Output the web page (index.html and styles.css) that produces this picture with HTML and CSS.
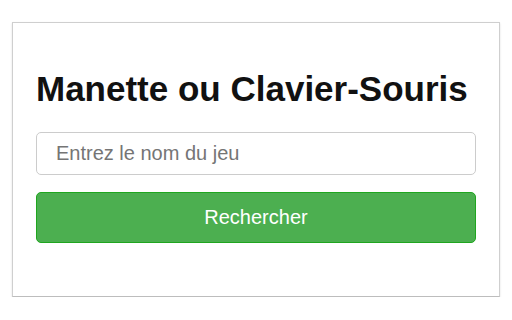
FILE: index.html
```html
<!DOCTYPE html>
<html lang="fr">
<head>
<meta charset="utf-8">
<title>Manette ou Clavier-Souris</title>
<link rel="stylesheet" href="styles.css">
</head>
<body>
<div class="card">
  <h1 class="title">Manette ou Clavier-Souris</h1>
  <form class="search" onsubmit="return false;">
    <input class="field" type="text" placeholder="Entrez le nom du jeu">
    <button class="btn" type="submit">Rechercher</button>
  </form>
</div>
</body>
</html>
```
FILE: styles.css
```css
html, body {
  margin: 0;
  padding: 0;
  background: #ffffff;
}
body {
  padding: 22px 12px 0 12px;
  font-family: "Liberation Sans", Arial, sans-serif;
}
.card {
  width: 488px;
  height: 275px;
  box-sizing: border-box;
  border: 1px solid #cfcfcf;
  border-bottom-color: #bdbdbd;
  box-shadow: 0 1px 2px rgba(0,0,0,0.12);
  padding: 46px 23px 0 23px;
  background: #fff;
}
.title {
  margin: 0;
  font-size: 35px;
  line-height: 40px;
  font-weight: bold;
  color: #111;
}
.search {
  margin-top: 23px;
  display: flex;
  flex-direction: column;
  gap: 17px;
}
.field {
  box-sizing: border-box;
  width: 440px;
  height: 43px;
  border: 1px solid #cccccc;
  border-radius: 5px;
  padding: 0 19px;
  font-family: "Liberation Sans", Arial, sans-serif;
  font-size: 20px;
  color: #333;
  outline: none;
}
.field::placeholder {
  color: #757575;
}
.btn {
  box-sizing: border-box;
  width: 440px;
  height: 51px;
  border: 1px solid #1fa61f;
  border-radius: 5px;
  background: #4caf50;
  color: #ffffff;
  font-family: "Liberation Sans", Arial, sans-serif;
  font-size: 20px;
  padding: 0;
  cursor: pointer;
}
```
